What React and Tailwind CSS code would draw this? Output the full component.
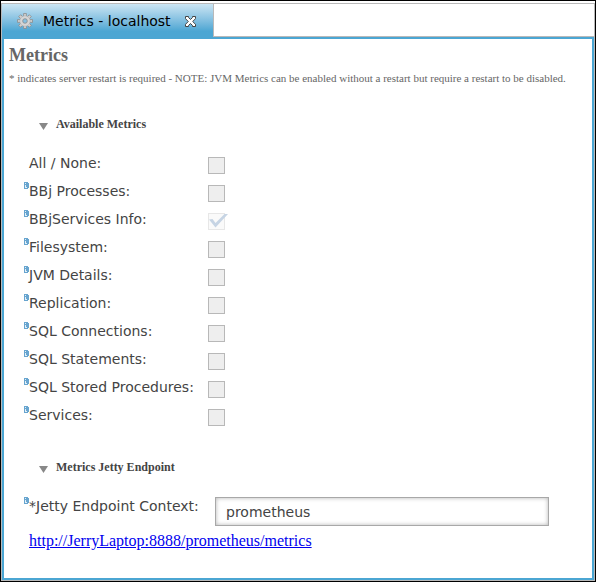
import { useState } from "react";

const METRICS = [
  { id: "all", label: "All / None:" },
  { id: "processes", label: "BBj Processes:", hint: true },
  { id: "info", label: "BBjServices Info:", hint: true, locked: true },
  { id: "filesystem", label: "Filesystem:", hint: true },
  { id: "jvm", label: "JVM Details:", hint: true },
  { id: "replication", label: "Replication:", hint: true },
  { id: "connections", label: "SQL Connections:", hint: true },
  { id: "statements", label: "SQL Statements:", hint: true },
  { id: "procedures", label: "SQL Stored Procedures:", hint: true },
  { id: "services", label: "Services:", hint: true },
];

const toggleable = METRICS.filter((m) => m.id !== "all" && !m.locked);

const GearIcon = () => (
  <svg viewBox="0 0 16 16" className="w-4 h-4 shrink-0" aria-hidden="true">
    <g fill="#cfcfcf" stroke="#858585" strokeWidth="0.7" strokeLinejoin="round">
      {[0, 45, 90, 135, 180, 225, 270, 315].map((a) => (
        <path key={a} d="M6.6 3.6V.5h2.8v3.1z" transform={`rotate(${a} 8 8)`} />
      ))}
    </g>
    <circle cx="8" cy="8" r="5.2" fill="#d6d6d6" stroke="#a5a5a5" strokeWidth="0.4" />
    <circle cx="8" cy="8" r="2.3" fill="#86c0e0" stroke="#8a8a8a" strokeWidth="0.8" />
  </svg>
);

const CloseIcon = () => (
  <svg viewBox="0 0 11 11" className="w-[11px] h-[11px]" aria-hidden="true">
    <path
      d="M.5.5h3v1l2 2 2-2v-1h3v2.2L7.7 5.5l2.8 2.8v2.2h-3v-1l-2-2-2 2v1h-3V8.3l2.8-2.8L.5 2.7z"
      fill="#fff"
      stroke="#444"
      strokeWidth="1"
    />
  </svg>
);

const HintIcon = () => (
  <svg viewBox="0 0 5 7" className="w-[5px] h-[7px]" shapeRendering="crispEdges" aria-hidden="true">
    <path d="M0 0h4v1h1v5H4v1H0z" fill="#68a5cf" />
    <path d="M1 1h1v1H1zM1 3h1v2h1v1H1z" fill="#e4f0f8" />
  </svg>
);

const Label = ({ htmlFor, hint, children }) => (
  <div className="flex w-[184px] shrink-0">
    <span className="w-[5px] shrink-0 pt-[5px]">{hint && <HintIcon />}</span>
    <label htmlFor={htmlFor} className="leading-7 whitespace-nowrap">{children}</label>
  </div>
);

const CheckBox = ({ id, checked, disabled, onChange }) => (
  <span className="relative block w-[17px] h-[17px] mt-2">
    <input
      id={id}
      type="checkbox"
      checked={checked}
      disabled={disabled}
      onChange={onChange}
      className="block appearance-none w-[17px] h-[17px] border border-[#b8b8b8] bg-[#eeeeee] disabled:border-[#e7e7e7] disabled:bg-[#fafafa]"
    />
    {checked && (
      <svg viewBox="0 0 20 15" className="absolute top-0 left-0 w-5 h-[15px] pointer-events-none" aria-hidden="true">
        <path d="M1 6.5 4.5 6l3 4L16.5 1H20L7.5 14.5z" fill={disabled ? "#c6d4e4" : "#5b82b5"} />
      </svg>
    )}
  </span>
);

const Section = ({ title, className, children }) => {
  const [open, setOpen] = useState(true);
  return (
    <section className={className}>
      <h2 className="font-['Liberation_Serif',serif] text-xs font-bold">
        <button type="button" aria-expanded={open} onClick={() => setOpen(!open)} className="flex items-center gap-2 ml-[30px] leading-4">
          <svg viewBox="0 0 9 7" className={`w-[9px] h-[7px] mt-1 ${open ? "" : "-rotate-90"}`} aria-hidden="true">
            <path d="M0 0h9L4.5 7z" fill="#888" />
          </svg>
          {title}
        </button>
      </h2>
      {open && children}
    </section>
  );
};

const App = () => {
  const [enabled, setEnabled] = useState({ info: true });
  const [context, setContext] = useState("prometheus");

  const isChecked = (id) => (id === "all" ? toggleable.every((m) => enabled[m.id]) : !!enabled[id]);

  const handleToggle = (id, value) => {
    if (id !== "all") return setEnabled({ ...enabled, [id]: value });
    const next = { info: true };
    toggleable.forEach((m) => { next[m.id] = value; });
    setEnabled(next);
  };

  return (
    <div className="min-h-screen flex flex-col border border-black bg-white pt-[2px] font-['DejaVu_Sans',sans-serif] text-sm text-[#444]">
      <div className="flex-1 flex flex-col border border-[#b9b9b9]">
        <div className="flex h-[33px] border-b border-[#b9b9b9]">
          <div className="flex items-center h-[34px] pl-[15px] pr-[17px] border-r border-[#b9b9b9] bg-linear-to-b from-[#cbe5f3] to-[#4ba6d3] to-80% text-black">
            <GearIcon />
            <button type="button" className="ml-[10px] whitespace-nowrap">Metrics - localhost</button>
            <button type="button" aria-label="Close tab" className="ml-[14px]"><CloseIcon /></button>
          </div>
        </div>

        <main className="flex-1 border-2 border-[#4ba6d3] px-[5px] pt-1">
          <h1 className="font-['Liberation_Serif',serif] text-lg leading-6 font-bold text-[#666]">Metrics</h1>
          <p className="mt-[3px] font-['Liberation_Serif',serif] text-[11px] leading-4 text-[#666]">
            * indicates server restart is required - NOTE: JVM Metrics can be enabled without a restart but require a restart to be disabled.
          </p>

          <Section title="Available Metrics" className="mt-[30px]">
            <div className="mt-[17px] ml-[15px]">
              {METRICS.map((m) => (
                <div key={m.id} className="flex h-7">
                  <Label htmlFor={m.id} hint={m.hint}>{m.label}</Label>
                  <CheckBox
                    id={m.id}
                    checked={isChecked(m.id)}
                    disabled={!!m.locked}
                    onChange={(e) => handleToggle(m.id, e.target.checked)}
                  />
                </div>
              ))}
            </div>
          </Section>

          <Section title="Metrics Jetty Endpoint" className="mt-[30px]">
            <div className="mt-[17px] ml-[15px]">
              <div className="flex">
                <Label htmlFor="context" hint>*Jetty Endpoint Context:</Label>
                <input
                  id="context"
                  type="text"
                  value={context}
                  onChange={(e) => setContext(e.target.value)}
                  className="flex-1 min-w-0 h-[29px] mt-[5px] ml-[7px] mr-[38px] px-[10px] border border-[#a8a8a8] bg-white shadow-[inset_0_0_4px_rgba(0,0,0,0.3)] focus:outline-none"
                />
              </div>
              <a href={`http://JerryLaptop:8888/${context}/metrics`} className="inline-block mt-[5px] ml-[5px] font-['Liberation_Serif',serif] text-base leading-5 text-[#0000ee] underline">
                http://JerryLaptop:8888/{context}/metrics
              </a>
            </div>
          </Section>
        </main>
      </div>
    </div>
  );
};

export default App;
